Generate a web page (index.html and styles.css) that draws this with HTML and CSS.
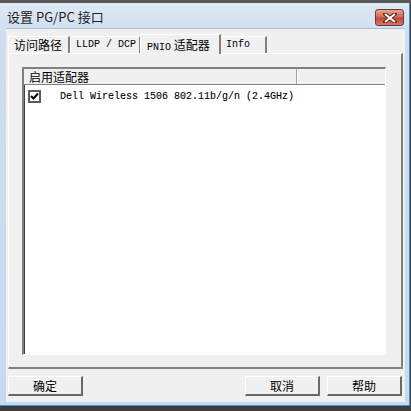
FILE: index.html
```html
<!DOCTYPE html>
<html>
  <head>
    <meta charset="UTF-8" />
    <title>设置 PG/PC 接口</title>
    <link rel="stylesheet" href="styles.css">
  </head>
  <body>
    <div class="topbar"></div>
    <div class="window">
      <div class="titlebar">
        <span class="title">设置 PG/PC 接口</span>
        <button class="close-btn" title="关闭">
          <svg width="14" height="10" viewBox="0 0 14 10">
            <path d="M2 1 L12 9 M12 1 L2 9" stroke="#5a2a24" stroke-width="4" stroke-linecap="square" />
            <path d="M2 1 L12 9 M12 1 L2 9" stroke="#ffffff" stroke-width="2" />
          </svg>
        </button>
      </div>

      <div class="client">
        <!-- 选项卡 -->
        <div class="tabs">
          <div class="tab tab-path cjk">访问路径</div>
          <div class="tab tab-lldp mono">LLDP / DCP</div>
          <div class="tab tab-pnio active"><span class="mono">PNIO</span> <span class="cjk">适配器</span></div>
          <div class="tab tab-info mono">Info</div>
        </div>

        <div class="panel">
          <div class="listview">
            <div class="lv-header">
              <div class="lv-col col-1">启用适配器</div>
              <div class="lv-col col-2"></div>
            </div>
            <div class="lv-row">
              <span class="checkbox">
                <svg width="9" height="9" viewBox="0 0 9 9">
                  <path d="M1 4 L3.5 6.5 L8 1.5" stroke="#000" stroke-width="2" fill="none" />
                </svg>
              </span>
              <span class="mono item-text">Dell Wireless 1506 802.11b/g/n (2.4GHz)</span>
            </div>
          </div>
        </div>

        <div class="buttons">
          <button class="btn">确定</button>
          <div class="spacer"></div>
          <button class="btn">取消</button>
          <button class="btn">帮助</button>
        </div>
      </div>
    </div>
  </body>
</html>
```

FILE: styles.css
```css
body {
  margin: 0;
  width: 411px;
  height: 411px;
  overflow: hidden;
  background: #3c3c3c;
  font-family: "Noto Sans CJK SC", "Liberation Sans", sans-serif;
  font-size: 12px;
  color: #000;
}

.topbar {
  height: 3px;
  background: #585858;
}

.window {
  width: 410px;
  height: 403px;
  box-sizing: border-box;
  background: linear-gradient(#dfe9f5, #cfdef0 30px, #c8d9ee);
  border-right: 1px solid #3f8fd1;
  border-bottom: 1px solid #3f8fd1;
  display: flex;
  flex-direction: column;
}

.titlebar {
  height: 25px;
  display: flex;
  align-items: center;
  padding: 0 0 0 7px;
}

.title {
  font-size: 13px;
  color: #1e1e1e;
  flex: 1;
  padding-top: 1px;
}

.close-btn {
  width: 29px;
  height: 17px;
  margin: 4px 5px 0 0;
  padding: 0;
  border: 1px solid #6a3a34;
  border-radius: 3px;
  background: linear-gradient(#e8a493, #d26a56 45%, #c04b36 55%, #d5786a);
  display: flex;
  align-items: center;
  justify-content: center;
}

.client {
  flex: 1;
  margin: 0 4px 3px 6px;
  background: #f0f0f0;
  border-top: 1px solid #aabfd6;
  display: flex;
  flex-direction: column;
  padding: 0 3px 0 2px;
}

.mono {
  font-family: "Liberation Mono", monospace;
  font-size: 10px;
}

.cjk {
  font-family: "Noto Sans CJK SC", sans-serif;
  font-size: 12px;
}

.tabs {
  display: flex;
  align-items: flex-end;
  height: 24px;
  position: relative;
  z-index: 1;
}

.tab {
  box-sizing: border-box;
  height: 17px;
  line-height: 16px;
  padding: 0 5px;
  border-left: 1px solid #fff;
  border-top: 1px solid #fff;
  border-right: 2px solid #808080;
  background: #f0f0f0;
  white-space: nowrap;
}

.tab-path {
  width: 62px;
}

.tab-lldp {
  width: 71px;
}

.tab-pnio {
  width: 81px;
}

.tab-info {
  width: 47px;
}

.tab.active {
  height: 20px;
  line-height: 19px;
  padding: 0 6px;
  margin: 0 -1px;
  position: relative;
  top: 1px;
  background: #f0f0f0;
}

.panel {
  height: 316px;
  box-sizing: border-box;
  border-top: 1px solid #fff;
  border-left: 1px solid #fff;
  border-right: 2px solid #808080;
  border-bottom: 2px solid #808080;
  padding: 13px 15px 12px 13px;
  margin-right: -1px;
}

.listview {
  height: 100%;
  box-sizing: border-box;
  background: #fff;
  border-top: 2px solid #808080;
  border-left: 2px solid #808080;
  border-right: 1px solid #fff;
  border-bottom: 1px solid #fff;
  box-shadow: inset 1px 1px 0 #404040;
}

.lv-header {
  display: flex;
  height: 15px;
  background: #f0f0f0;
  border-bottom: 1px solid #808080;
}

.lv-col {
  height: 15px;
  line-height: 15px;
  padding-left: 5px;
  box-sizing: border-box;
  border-right: 1px solid #a0a0a0;
}

.col-1 {
  width: 273px;
  font-size: 12px;
}

.col-2 {
  flex: 1;
  border-left: 1px solid #fff;
  border-right: 0;
}

.lv-row {
  display: flex;
  align-items: center;
  height: 18px;
  padding: 2px 0 0 4px;
}

.checkbox {
  width: 9px;
  height: 9px;
  border: 2px solid #5a5a5a;
  background: #fff;
  display: flex;
  align-items: center;
  justify-content: center;
}

.item-text {
  margin-left: 19px;
  color: #000;
  -webkit-text-stroke: 0.1px #000;
}

.buttons {
  display: flex;
  margin-top: 7px;
  gap: 7px;
}

.spacer {
  flex: 1;
}

.btn {
  width: 75px;
  height: 20px;
  padding: 0;
  background: #f0f0f0;
  border-top: 1px solid #fff;
  border-left: 1px solid #fff;
  border-right: 2px solid #696969;
  border-bottom: 2px solid #696969;
  font-family: "Noto Sans CJK SC", sans-serif;
  font-size: 12px;
  line-height: 16px;
}
```
